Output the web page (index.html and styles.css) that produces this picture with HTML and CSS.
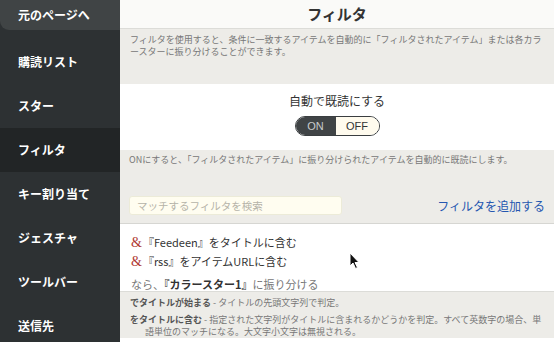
FILE: index.html
```html
<!DOCTYPE html>
<html lang="ja">
  <head>
    <meta charset="UTF-8" />
    <title>フィルタ</title>
    <link rel="stylesheet" href="styles.css">
  </head>
  <body>
    <div class="app">
      <nav class="sidebar">
        <a class="back">元のページへ</a>
        <ul class="menu">
          <li>購読リスト</li>
          <li>スター</li>
          <li class="active">フィルタ</li>
          <li>キー割り当て</li>
          <li>ジェスチャ</li>
          <li>ツールバー</li>
          <li>送信先</li>
        </ul>
      </nav>
      <main class="main">
        <header class="title">フィルタ</header>
        <div class="desc">
          フィルタを使用すると、条件に一致するアイテムを自動的に「フィルタされたアイテム」または各カラースターに振り分けることができます。
        </div>
        <section class="auto">
          <div class="auto-label">自動で既読にする</div>
          <div class="toggle">
            <span class="on">ON</span>
            <span class="off">OFF</span>
          </div>
        </section>
        <section class="note">
          <p>ONにすると、「フィルタされたアイテム」に振り分けられたアイテムを自動的に既読にします。</p>
          <div class="search-row">
            <input class="search" type="text" placeholder="マッチするフィルタを検索" />
            <a class="add">フィルタを追加する</a>
          </div>
        </section>
        <section class="rules">
          <div class="rule"><span class="amp">&amp;</span>『Feedeen』をタイトルに含む</div>
          <div class="rule"><span class="amp">&amp;</span>『rss』をアイテムURLに含む</div>
          <div class="then">なら、<b>『カラースター1』</b>に振り分ける</div>
          <svg class="cursor" width="12" height="18" viewBox="0 0 12 18">
            <path d="M1 1 L1 14 L4 11 L6.5 16.5 L8.5 15.5 L6 10.5 L10 10.5 Z" fill="#111" stroke="#fff" stroke-width="1" />
          </svg>
        </section>
        <section class="help">
          <ul>
            <li><b>でタイトルが始まる</b> - タイトルの先頭文字列で判定。</li>
            <li>
              <span class="line"><b>をタイトルに含む</b> - 指定された文字列がタイトルに含まれるかどうかを判定。すべて英数字の場合、単</span>
              <span class="cont">語単位のマッチになる。大文字小文字は無視される。</span>
            </li>
          </ul>
        </section>
      </main>
    </div>
  </body>
</html>
```

FILE: styles.css
```css
body {
  margin: 0;
  font-family: "Noto Sans CJK JP", "Noto Sans", sans-serif;
  color: #333;
  overflow: hidden;
}
.app {
  display: flex;
  height: 342px;
}
.sidebar {
  width: 120px;
  flex: none;
  background: #2d3133;
}
.back {
  display: block;
  height: 30px;
  line-height: 30px;
  padding-left: 18px;
  background: #404445;
  border-bottom-left-radius: 9px;
  color: #fff;
  font-size: 12px;
  font-weight: bold;
}
.menu {
  list-style: none;
  margin: 10px 0 0;
  padding: 0;
}
.menu li {
  height: 44px;
  line-height: 44px;
  padding-left: 18px;
  color: #fff;
  font-size: 12px;
  font-weight: bold;
}
.menu li.active {
  background: #222526;
}
.main {
  flex: 1;
  position: relative;
  background: #fff;
}
.title {
  height: 28px;
  line-height: 28px;
  text-align: center;
  font-size: 15px;
  font-weight: bold;
  color: #333;
  background: #fafaf8;
  border-bottom: 1px solid #dcdcd8;
}
.desc {
  height: 55px;
  box-sizing: border-box;
  padding: 5px 8px 0 10px;
  background: #edece8;
  color: #777;
  font-size: 9px;
  line-height: 12px;
}
.auto {
  height: 66px;
  box-sizing: border-box;
  padding-top: 9px;
  display: flex;
  flex-direction: column;
  align-items: center;
}
.auto-label {
  font-size: 12px;
  line-height: 16px;
  color: #333;
}
.toggle {
  display: flex;
  margin-top: 7px;
  height: 18px;
  border: 1px solid #3a3e40;
  border-radius: 10px;
  overflow: hidden;
  font-family: "Liberation Sans", sans-serif;
  font-size: 11px;
  line-height: 18px;
}
.toggle .on {
  width: 40px;
  text-align: center;
  background: #404446;
  color: #c9cbcc;
}
.toggle .off {
  width: 43px;
  text-align: center;
  background: #fffbee;
  color: #333;
}
.note {
  height: 74px;
  box-sizing: border-box;
  padding: 4px 9px 0 9px;
  background: #edece8;
  border-bottom: 1px solid #d6d6d2;
}
.note p {
  margin: 0;
  font-size: 9px;
  line-height: 12px;
  color: #777;
}
.search-row {
  display: flex;
  align-items: center;
  justify-content: space-between;
  margin-top: 30px;
}
.search {
  width: 213px;
  height: 19px;
  box-sizing: border-box;
  padding: 0 7px;
  border: 1px solid #ecebd8;
  border-radius: 3px;
  background: #fffdf0;
  font-family: inherit;
  font-size: 10.5px;
  outline: none;
}
.search::placeholder {
  color: #b5b3a8;
}
.add {
  color: #2557b0;
  font-size: 12px;
}
.rules {
  position: relative;
  height: 67px;
  box-sizing: border-box;
  padding: 9px 10px 0 11px;
  font-size: 11px;
}
.rule {
  line-height: 18px;
}
.amp {
  color: #b03a34;
  font-family: "Liberation Serif", serif;
  font-size: 14px;
  margin-right: 1px;
}
.then {
  margin-top: 4px;
  line-height: 18px;
  color: #777;
}
.then b {
  color: #333;
}
.cursor {
  position: absolute;
  left: 229px;
  top: 28px;
}
.help {
  background: #edece8;
  border-top: 1px solid #dcdcd8;
  padding: 5px 0 0 10px;
  color: #777;
  font-size: 9px;
  line-height: 12px;
}
.help ul {
  list-style: none;
  margin: 0;
  padding: 0;
}
.help li {
  margin-bottom: 5px;
  white-space: nowrap;
}
.help .line,
.help .cont {
  display: block;
}
.help .cont {
  padding-left: 15px;
}
.help b {
  color: #555;
}
```
